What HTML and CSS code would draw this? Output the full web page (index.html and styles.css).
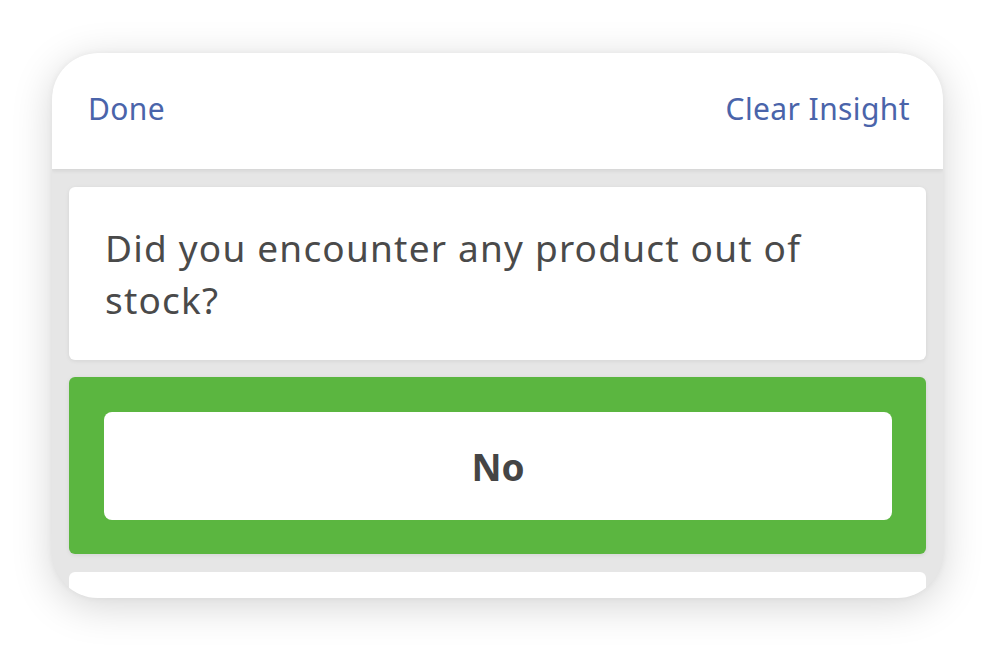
FILE: index.html
```html
<!DOCTYPE html>
<html>
<head>
<meta charset="utf-8">
<link rel="stylesheet" href="styles.css">
</head>
<body>
<div class="phone">
  <div class="header">
    <span class="link">Done</span>
    <span class="link">Clear Insight</span>
  </div>
  <div class="content">
    <div class="question">Did you encounter any product out of stock?</div>
    <div class="answer">
      <div class="option">No</div>
    </div>
    <div class="next"></div>
  </div>
</div>
</body>
</html>
```
FILE: styles.css
```css
html, body {
  margin: 0;
  padding: 0;
  background: #ffffff;
}
body {
  box-sizing: border-box;
  min-height: 650px;
  padding: 53px 0 0 52px;
  font-family: "Noto Sans", "Open Sans", sans-serif;
}
.phone {
  width: 891px;
  height: 545px;
  border-radius: 46px;
  overflow: hidden;
  background: #e6e6e6;
  box-shadow: 0 8px 40px rgba(0, 0, 0, 0.17), 0 0 6px rgba(0,0,0,0.05);
  display: flex;
  flex-direction: column;
}
.header {
  box-sizing: border-box;
  height: 116px;
  flex: none;
  background: #ffffff;
  display: flex;
  justify-content: space-between;
  align-items: center;
  padding: 0 33px 5px 36px;
  box-shadow: 0 2px 4px rgba(0, 0, 0, 0.08);
  position: relative;
  z-index: 1;
}
.link {
  color: #4a64aa;
  font-size: 30px;
  letter-spacing: 0.4px;
}
.content {
  padding: 18px 17px 0 17px;
  display: flex;
  flex-direction: column;
  gap: 17px;
}
.question {
  background: #ffffff;
  border-radius: 6px;
  padding: 35px 40px 34px 36px;
  font-size: 37px;
  letter-spacing: 1.2px;
  line-height: 52px;
  color: #4a4a4a;
  box-shadow: 0 1px 4px rgba(0, 0, 0, 0.08);
}
.answer {
  background: #5bb640;
  border-radius: 6px;
  padding: 35px 34px 34px 35px;
  box-shadow: 0 1px 4px rgba(0, 0, 0, 0.08);
}
.option {
  background: #ffffff;
  border-radius: 8px;
  height: 108px;
  display: flex;
  align-items: center;
  justify-content: center;
  font-size: 37px;
  font-weight: 700;
  color: #454545;
}
.next {
  margin-top: 1px;
  background: #ffffff;
  border-radius: 6px;
  height: 60px;
}
```
